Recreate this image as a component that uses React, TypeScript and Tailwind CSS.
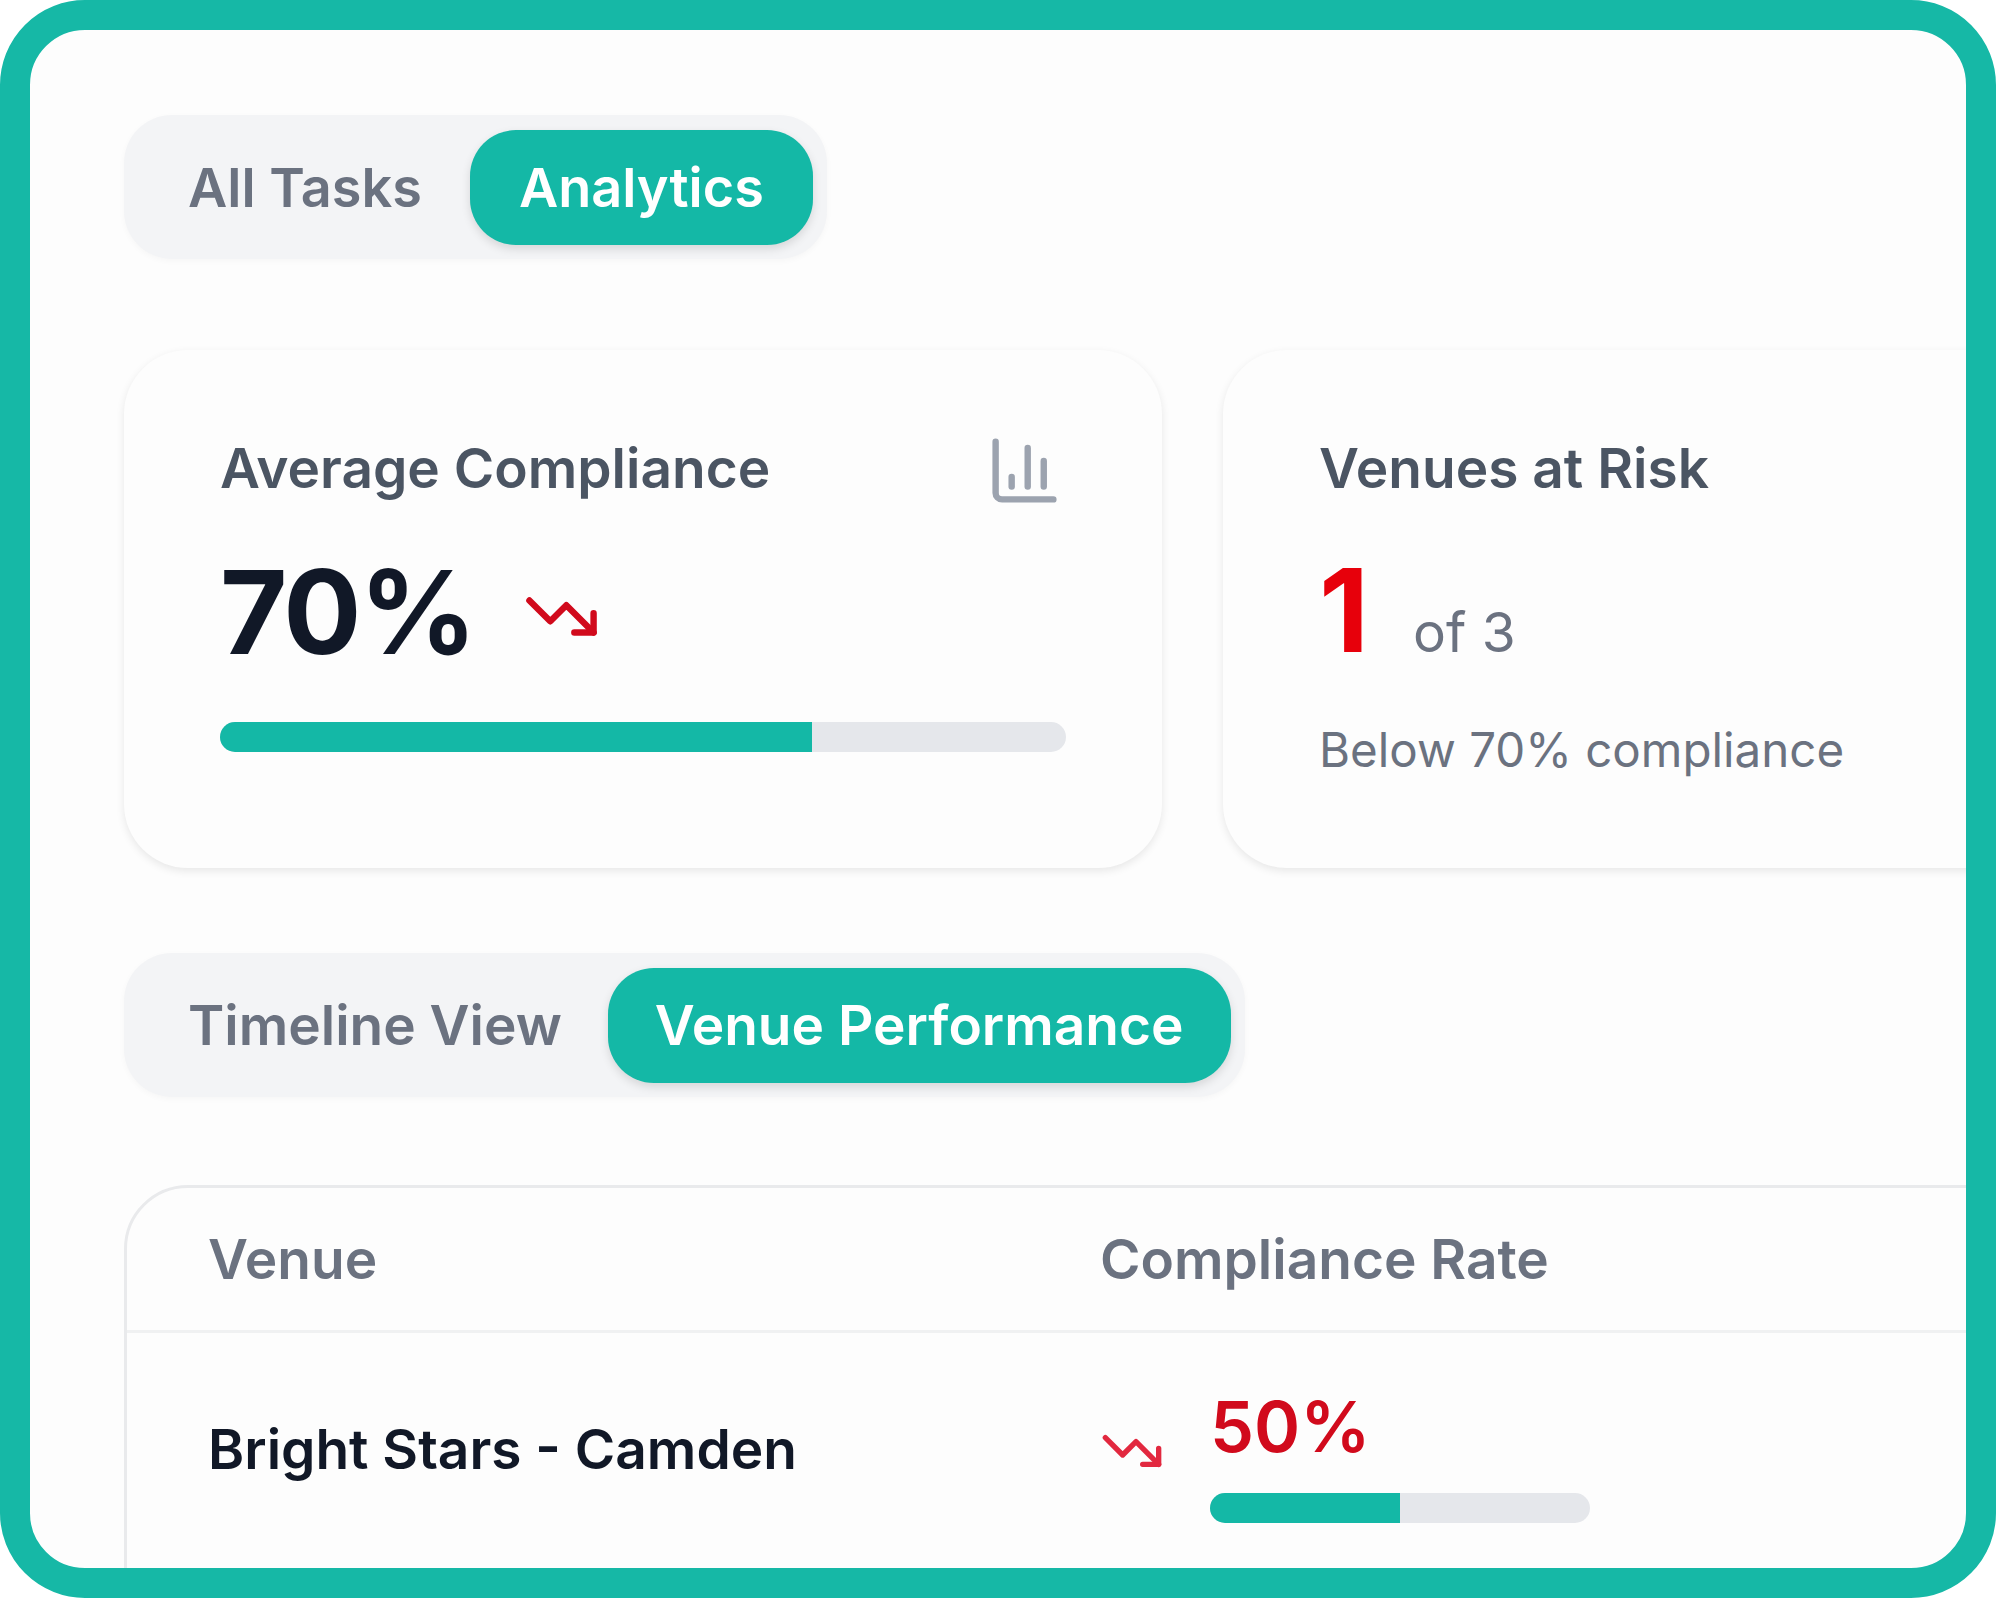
import { ChartColumn, TrendingDown } from "lucide-react";

const Tabs = ({ left, right, leftClass, rightClass }: { left: string; right: string; leftClass: string; rightClass: string }) => (
  <div className="flex h-[144px] w-fit items-center rounded-[48px] bg-[#f3f4f6] pl-[14px] pr-[14px] shadow-[0_2px_6px_rgba(0,0,0,0.03)]">
    <div className={`font-semibold text-[#6b7280] ${leftClass}`}>{left}</div>
    <div className={`flex h-[115px] items-center rounded-[46px] bg-[#14b8a6] font-semibold text-white shadow-[0_4px_10px_rgba(0,0,0,0.12)] ${rightClass}`}>
      {right}
    </div>
  </div>
);

const Bar = ({ value, className }: { value: number; className: string }) => (
  <div className={`h-[30px] overflow-hidden rounded-full bg-[#e5e7eb] ${className}`}>
    <div className="h-full bg-[#14b8a6]" style={{ width: `${value}%` }} />
  </div>
);

export default function App() {
  return (
    <div className="h-[1598px] w-[1996px] overflow-hidden rounded-[85px] border-[30px] border-[#16b8a6] bg-[#fdfdfd] font-[Inter,sans-serif]">
      <div className="h-full w-full overflow-hidden pl-[94px] pt-[85px]">
        <Tabs left="All Tasks" right="Analytics" leftClass="ml-[50px] mr-[48px] text-[54px]" rightClass="px-[49px] text-[54px]" />

        <div className="mt-[91px] flex gap-[61px]">
          <div className="h-[518px] w-[1038px] shrink-0 rounded-[64px] bg-[#fdfdfd] px-[96px] pt-[80px] shadow-[0_3px_8px_rgba(0,0,0,0.09)]">
            <div className="flex h-[77px] items-center justify-between">
              <div className="text-[55px] font-semibold leading-[77px] text-[#4b5563]">Average Compliance</div>
              <ChartColumn size={77} strokeWidth={2} className="mr-[3px] mt-[4px] text-[#9ca3af]" />
            </div>
            <div className="mt-[36px] flex items-center gap-[48px]">
              <div className="text-[116px] font-bold leading-[138px] tracking-[-0.02em] text-[#111827]">70%</div>
              <TrendingDown size={77} strokeWidth={2} className="mt-[8px] text-[#d10a1c]" />
            </div>
            <Bar value={70} className="mt-[41px] w-[846px]" />
          </div>

          <div className="h-[518px] w-[938px] shrink-0 rounded-[64px] bg-[#fdfdfd] px-[96px] pt-[80px] shadow-[0_3px_8px_rgba(0,0,0,0.09)]">
            <div className="h-[77px] text-[55px] font-semibold leading-[77px] text-[#4b5563]">Venues at Risk</div>
            <div className="mt-[34px] flex items-baseline gap-[44px]">
              <div className="text-[116px] font-bold leading-[138px] text-[#e7000b]">1</div>
              <div className="text-[55px] text-[#6b7280]">of 3</div>
            </div>
            <div className="mt-[35px] text-[47.5px] text-[#6b7280]">Below 70% compliance</div>
          </div>
        </div>

        <div className="mt-[85px]">
          <Tabs left="Timeline View" right="Venue Performance" leftClass="ml-[50px] mr-[46px] text-[55px]" rightClass="px-[47px] text-[55px]" />
        </div>

        <div className="mt-[88px] h-[500px] w-[2000px] rounded-tl-[64px] border-[3px] border-[#e9eaec]">
          <div className="grid h-[145px] grid-cols-[892px_1fr] items-center border-b-[3px] border-[#f0f1f2] pl-[81px] text-[55px] font-semibold text-[#6b7280]">
            <div>Venue</div>
            <div>Compliance Rate</div>
          </div>
          <div className="grid h-[232px] grid-cols-[892px_1fr] items-center pl-[81px]">
            <div className="text-[55px] font-semibold text-[#111827]">Bright Stars - Camden</div>
            <div className="flex items-center gap-[46px]">
              <TrendingDown size={64} strokeWidth={2} className="mt-[4px] text-[#e2283f]" />
              <div className="mt-[12px]">
                <div className="text-[70px] font-semibold leading-[77px] text-[#d10a1c]">50%</div>
                <Bar value={50} className="mt-[28px] w-[380px]" />
              </div>
            </div>
          </div>
        </div>
      </div>
    </div>
  );
}
